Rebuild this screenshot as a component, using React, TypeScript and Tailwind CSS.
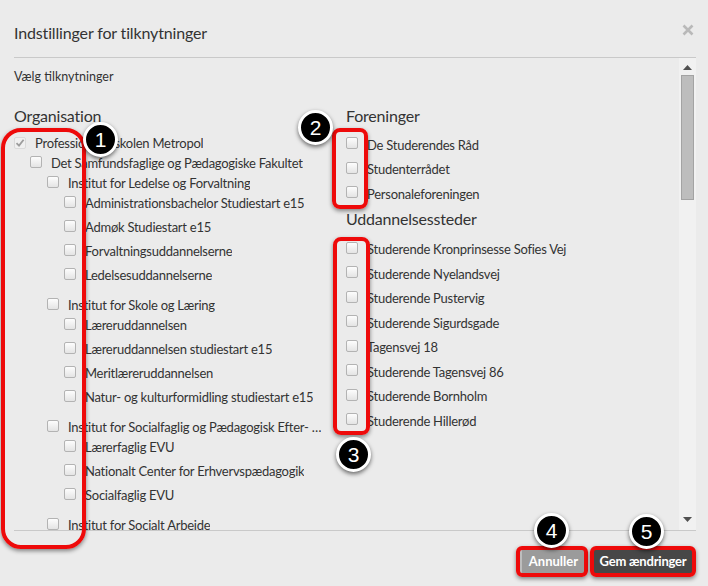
import React from 'react';

type Row = { t: string; l: number; checked?: boolean; head?: boolean; gap?: boolean };

const tree: Row[] = [
  { t: 'Professionshøjskolen Metropol', l: 0, checked: true },
  { t: 'Det Samfundsfaglige og Pædagogiske Fakultet', l: 1 },
  { t: 'Institut for Ledelse og Forvaltning', l: 2, head: true },
  { t: 'Administrationsbachelor Studiestart e15', l: 3 },
  { t: 'Admøk Studiestart e15', l: 3 },
  { t: 'Forvaltningsuddannelserne', l: 3 },
  { t: 'Ledelsesuddannelserne', l: 3 },
  { t: 'Institut for Skole og Læring', l: 2, head: true, gap: true },
  { t: 'Læreruddannelsen', l: 3 },
  { t: 'Læreruddannelsen studiestart e15', l: 3 },
  { t: 'Meritlæreruddannelsen', l: 3 },
  { t: 'Natur- og kulturformidling studiestart e15', l: 3 },
  { t: 'Institut for Socialfaglig og Pædagogisk Efter- …', l: 2, head: true, gap: true },
  { t: 'Lærerfaglig EVU', l: 3 },
  { t: 'Nationalt Center for Erhvervspædagogik', l: 3 },
  { t: 'Socialfaglig EVU', l: 3 },
  { t: 'Institut for Socialt Arbeide', l: 2, head: true, gap: true },
];

const foreninger = ['De Studerendes Råd', 'Studenterrådet', 'Personaleforeningen'];
const steder = [
  'Studerende Kronprinsesse Sofies Vej',
  'Studerende Nyelandsvej',
  'Studerende Pustervig',
  'Studerende Sigurdsgade',
  'Tagensvej 18',
  'Studerende Tagensvej 86',
  'Studerende Bornholm',
  'Studerende Hillerød',
];

const indent = ['pl-0', 'pl-[16px]', 'pl-[33px]', 'pl-[50px]'];

const Box = ({ checked = false }: { checked?: boolean }) =>
  checked ? (
    <span className="mb-[3px] mr-[9px] flex h-[12px] w-[12px] shrink-0 items-center justify-center rounded-[2px] border border-[#dadada] bg-[#f0f0f0]">
      <svg width="10" height="10" viewBox="0 0 10 10">
        <path d="M1.5 5.2 L4 7.6 L8.6 1.8" fill="none" stroke="#9d9d9d" strokeWidth="1.8" />
      </svg>
    </span>
  ) : (
    <span className="mb-[4px] mr-[9px] h-[12px] w-[12px] shrink-0 rounded-[2px] border border-[#b3b3b3] bg-gradient-to-b from-[#fdfdfd] to-[#e4e4e4]" />
  );

const Badge = ({ n, className }: { n: number; className: string }) => (
  <div
    className={`absolute flex h-[35px] w-[35px] items-center justify-center rounded-full border-[3px] border-white bg-black font-['Liberation_Sans',sans-serif] text-[21px] text-white shadow-[0_2px_4px_rgba(0,0,0,0.55)] ${className}`}
  >
    {n}
  </div>
);

const Frame = ({ className }: { className: string }) => (
  <div className={`absolute border-[4px] border-[#ee0a0a] shadow-[0_2px_4px_rgba(0,0,0,0.45)] ${className}`} />
);

export default function App() {
  return (
    <div className="relative h-[586px] w-[708px] overflow-hidden bg-[#ebebeb] font-['Lato',sans-serif] text-[#333]">
      {/* header */}
      <div className="ml-[14px] mr-[12px] flex h-[58px] items-start justify-between border-b border-[#c9c9c9] pt-[21px]">
        <h1 className="text-[16px] leading-[24px] tracking-[-0.15px] text-[#333]">Indstillinger for tilknytninger</h1>
        <svg width="12" height="12" viewBox="0 0 12 12" className="mr-[2px] mt-[3px]">
          <path d="M1.5 1.5 L10.5 10.5 M10.5 1.5 L1.5 10.5" stroke="#b9b9b9" strokeWidth="2.6" />
        </svg>
      </div>

      {/* body */}
      <div className="flex h-[472px]">
        <div className="flex-1 overflow-hidden pl-[14px] pt-[10px]">
          <p className="text-[12.5px] leading-[18px]">Vælg tilknytninger</p>
          <div className="mt-[18px] grid grid-cols-[332px_1fr]">
            <div>
              <h3 className="text-[16px] leading-[24px] tracking-[-0.2px]">Organisation</h3>
              <ul className="mt-[6px] text-[13px] tracking-[-0.25px]">
                {tree.map((r, i) => (
                  <li
                    key={i}
                    className={`flex items-center ${indent[r.l]} ${r.l === 3 ? 'h-[24px] pb-[4px]' : 'h-[20px]'} ${r.gap ? 'mt-[6px]' : ''}`}
                  >
                    <Box checked={r.checked} />
                    <span className="truncate whitespace-nowrap">{r.t}</span>
                  </li>
                ))}
              </ul>
            </div>
            <div>
              <h3 className="text-[16px] leading-[24px] tracking-[-0.2px]">Foreninger</h3>
              <ul className="mt-[5px] text-[13px] tracking-[-0.25px]">
                {foreninger.map((t) => (
                  <li key={t} className="flex h-[24.5px] items-center">
                    <Box />
                    <span className="whitespace-nowrap">{t}</span>
                  </li>
                ))}
              </ul>
              <h3 className="text-[16px] leading-[24px] tracking-[-0.2px]">Uddannelsessteder</h3>
              <ul className="mt-[7px] text-[13px] tracking-[-0.25px]">
                {steder.map((t) => (
                  <li key={t} className="flex h-[24.5px] items-center">
                    <Box />
                    <span className="whitespace-nowrap">{t}</span>
                  </li>
                ))}
              </ul>
            </div>
          </div>
        </div>

        {/* scrollbar */}
        <div className="mr-[12px] flex w-[17px] flex-col items-center bg-[#f1f1f1]">
          <svg width="9" height="5" viewBox="0 0 9 5" className="mt-[7px]">
            <path d="M0 5 L4.5 0 L9 5 Z" fill="#505050" />
          </svg>
          <div className="mt-[5px] h-[125px] w-[13px] border border-[#a3a3a3] bg-[#bdbdbd]" />
          <div className="flex-1" />
          <svg width="9" height="5" viewBox="0 0 9 5" className="mb-[8px]">
            <path d="M0 0 L4.5 5 L9 0 Z" fill="#505050" />
          </svg>
        </div>
      </div>

      {/* footer */}
      <div className="ml-[14px] mr-[12px] flex justify-end gap-[8px] border-t border-[#c9c9c9] pr-[3px] pt-[19px]">
        <button className="flex h-[24px] w-[66px] items-center justify-center border-l-[3px] border-[#bdbdbd] bg-[#9b9b9b] text-[13px] font-bold text-white">
          Annuller
        </button>
        <button className="flex h-[24px] w-[100px] items-center justify-center bg-[#474747] text-[13px] font-bold tracking-[-0.2px] text-white">
          Gem ændringer
        </button>
      </div>

      {/* annotations */}
      <Frame className="left-[1px] top-[128px] h-[421px] w-[85px] rounded-[20px]" />
      <Frame className="left-[332px] top-[128px] h-[81px] w-[36px] rounded-[8px]" />
      <Frame className="left-[333px] top-[237px] h-[198px] w-[37px] rounded-[8px]" />
      <Frame className="left-[516px] top-[546px] h-[31px] w-[72px] rounded-[6px]" />
      <Frame className="left-[590px] top-[546px] h-[31px] w-[106px] rounded-[6px]" />

      <Badge n={1} className="left-[83px] top-[122px]" />
      <Badge n={2} className="left-[298px] top-[110px]" />
      <Badge n={3} className="left-[336px] top-[437px]" />
      <Badge n={4} className="left-[534px] top-[513px]" />
      <Badge n={5} className="left-[629px] top-[514px]" />
    </div>
  );
}
